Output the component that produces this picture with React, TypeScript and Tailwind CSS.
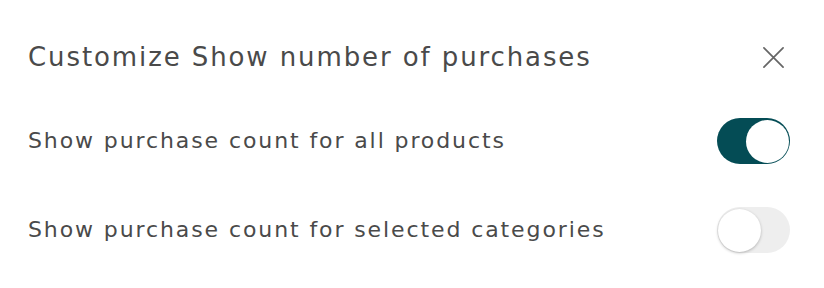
import React, { useState } from 'react';

const Toggle: React.FC<{ on: boolean; onChange: () => void }> = ({ on, onChange }) => (
  <button
    type="button"
    onClick={onChange}
    className={`relative flex h-[46px] w-[73px] shrink-0 items-center rounded-full p-[1px] ${
      on ? 'justify-end bg-[#044c55]' : 'justify-start bg-[#eeeeee]'
    }`}
  >
    <span
      className={`block h-[43px] w-[43px] rounded-full bg-white ${
        on ? '' : 'shadow-[0_1px_3px_rgba(0,0,0,0.25)]'
      }`}
    />
  </button>
);

const App: React.FC = () => {
  const [all, setAll] = useState(true);
  const [selected, setSelected] = useState(false);

  return (
    <div className="h-[288px] w-[824px] bg-white font-['DejaVu_Sans',sans-serif] text-[#4a4a4a]">
      <div className="flex items-center justify-between pl-[28px] pr-[39px] pt-[37px]">
        <h1 className="text-[26px] leading-[40px] tracking-[1.9px]">Customize Show number of purchases</h1>
        <button type="button" className="text-[#666]">
          <svg width="23" height="23" viewBox="0 0 24 24" fill="none" stroke="currentColor" strokeWidth="1.8" strokeLinecap="round">
            <path d="M2 2 L22 22 M22 2 L2 22" />
          </svg>
        </button>
      </div>
      <div className="mt-[41px] flex flex-col gap-[43px] pl-[28px] pr-[34px]">
        <div className="flex items-center justify-between">
          <span className="text-[22px] leading-[30px] tracking-[1.9px]">Show purchase count for all products</span>
          <Toggle on={all} onChange={() => setAll(!all)} />
        </div>
        <div className="flex items-center justify-between">
          <span className="text-[22px] leading-[30px] tracking-[1.9px]">Show purchase count for selected categories</span>
          <Toggle on={selected} onChange={() => setSelected(!selected)} />
        </div>
      </div>
    </div>
  );
};

export default App;
